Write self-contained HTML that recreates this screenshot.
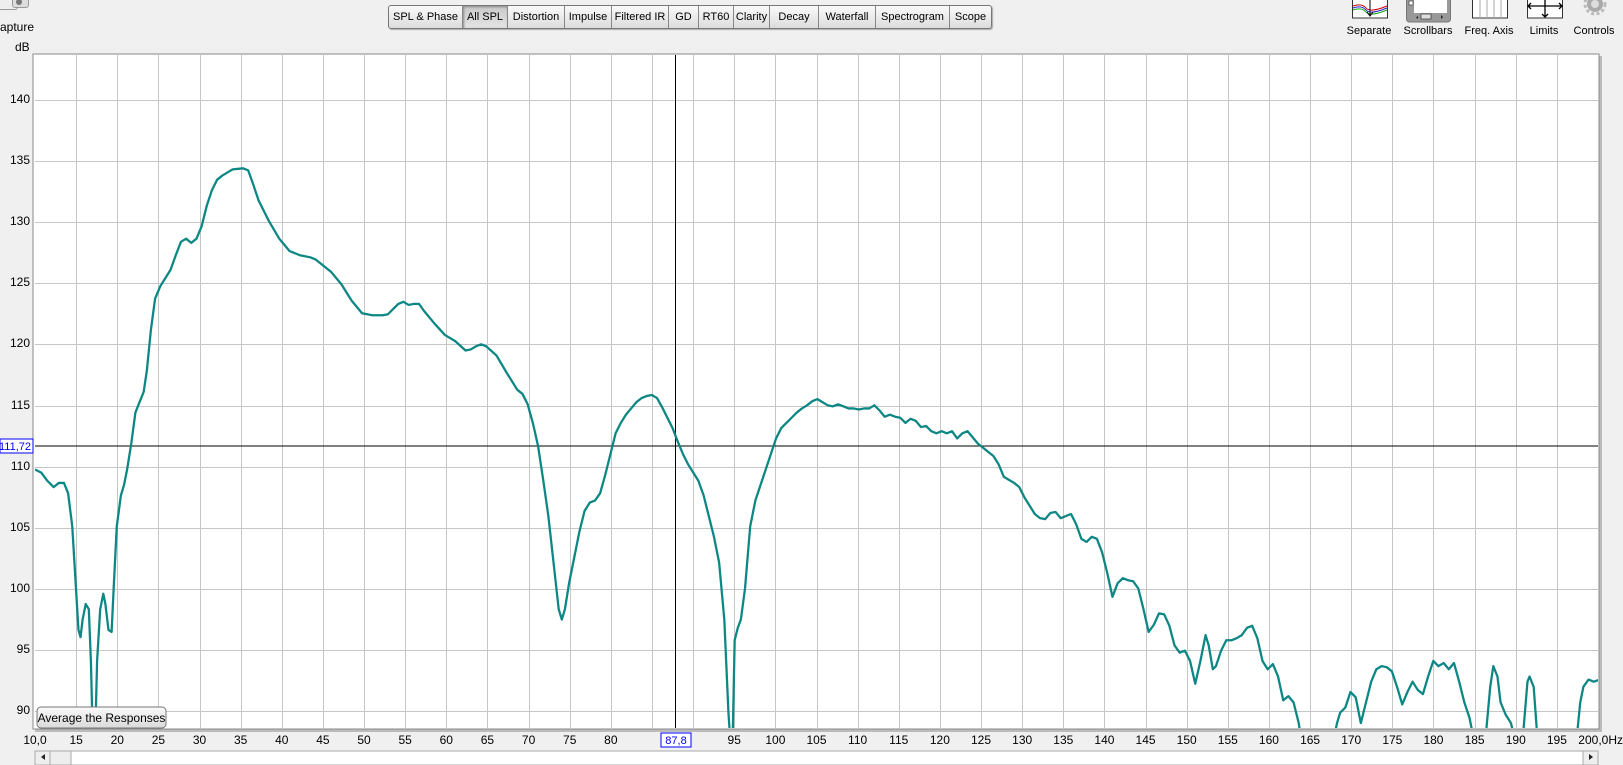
<!DOCTYPE html>
<html><head><meta charset="utf-8"><style>
html,body{margin:0;padding:0}
body{width:1623px;height:765px;background:#f0f0f0;position:relative;overflow:hidden;font-family:"Liberation Sans",Arial,sans-serif;color:#000}
.a{position:absolute;white-space:nowrap}
.tabs{position:absolute;left:388px;top:5px;height:22px;display:flex;border:1px solid #777;border-radius:3px;background:linear-gradient(#fafafa,#dcdcdc);box-shadow:1px 1px 1px #aaa}
.tabs div{font-size:11px;line-height:22px;border-right:1px solid #888;text-align:center;box-sizing:border-box;white-space:nowrap;overflow:hidden}
.tabs div.s{background:linear-gradient(#c9c9c9,#e4e4e4);box-shadow:inset 1px 1px 2px #888}
.lbl{font-size:11px;position:absolute;top:25px;transform:translateX(-50%);white-space:nowrap}
.yl{position:absolute;right:1593px;font-size:12px;text-align:right}
.xl{position:absolute;top:733px;font-size:12px;transform:translateX(-50%);white-space:nowrap}
</style></head><body>
<div class="a" style="left:-6px;top:-8px;width:22px;height:16px;border:1px solid #999;border-radius:3px;background:#eee"></div>
<div class="a" style="left:12px;top:-8px;width:15px;height:14px;border:1px solid #999;border-radius:3px;background:#ddd"></div>
<div class="a" style="left:16px;top:-1px;width:6px;height:6px;border-radius:50%;background:#777"></div>
<div class="a" style="left:0;top:20px;font-size:12px">apture</div>
<div class="a" style="left:15px;top:40px;font-size:12px">dB</div>

<div class="tabs">
<div style="width:74px">SPL &amp; Phase</div><div class="s" style="width:45px">All SPL</div><div style="width:57px">Distortion</div><div style="width:47px">Impulse</div><div style="width:57px">Filtered IR</div><div style="width:30px">GD</div><div style="width:35px">RT60</div><div style="width:36px">Clarity</div><div style="width:49px">Decay</div><div style="width:57px">Waterfall</div><div style="width:74px">Spectrogram</div><div style="width:41px;border-right:none">Scope</div>
</div>

<svg class="a" style="left:0;top:0" width="1623" height="24">
<rect x="1352.5" y="-2" width="35" height="20" fill="#fff" stroke="#333"/>
<path d="M1353 6 Q1362 3 1366 8 T1387 6" stroke="#c00" fill="none"/>
<path d="M1353 8 Q1362 5 1366 10 T1387 8" stroke="#22c" fill="none"/>
<path d="M1353 10 Q1362 7 1366 12 T1387 10" stroke="#1a1" fill="none"/>
<path d="M1370 0V15M1367 12l3 4 3-4" stroke="#000" fill="none"/>
<rect x="1406.5" y="-4" width="44" height="26" rx="3" fill="#999" stroke="#777"/>
<rect x="1414" y="-3" width="33" height="16" fill="#fff"/>
<rect x="1409" y="1" width="4" height="4" fill="#fff" stroke="#444" stroke-width=".7"/>
<rect x="1421" y="14" width="10" height="5" fill="#ddd" stroke="#333" stroke-width=".7"/>
<path d="M1418 16l-2 1.5 2 1.5zM1441 15v4l2-2z" fill="#222"/>
<rect x="1472.5" y="-2" width="35" height="20" fill="#fff" stroke="#333"/>
<path d="M1480 0v18M1487 0v18M1494 0v18M1501 0v18" stroke="#aaa"/>
<rect x="1527.5" y="-2" width="35" height="20" fill="#fff" stroke="#333"/>
<path d="M1529 6h32M1545 -2v18M1531 3l-3 3 3 3M1559 3l3 3-3 3M1542 14l3 3 3-3" stroke="#000" fill="none" stroke-width="1.3"/>
<circle cx="1595" cy="4" r="8" fill="#aaa"/><circle cx="1595" cy="4" r="4" fill="#ddd"/><circle cx="1595" cy="4" r="10" fill="none" stroke="#bbb" stroke-width="3" stroke-dasharray="3 2.5"/>
</svg>
<div class="lbl" style="left:1369px">Separate</div>
<div class="lbl" style="left:1428px">Scrollbars</div>
<div class="lbl" style="left:1489px">Freq. Axis</div>
<div class="lbl" style="left:1544px">Limits</div>
<div class="lbl" style="left:1594px">Controls</div>

<svg class="a" style="left:0;top:0" width="1623" height="765">
<defs><clipPath id="c"><rect x="35" y="55" width="1563" height="673"/></clipPath>
<linearGradient id="g" x1="0" x2="0" y1="0" y2="1"><stop offset="0" stop-color="#fafafa"/><stop offset="1" stop-color="#dadada"/></linearGradient></defs>
<rect x="35" y="56" width="1567" height="676" fill="#bbb"/>
<rect x="33" y="54" width="1566" height="675" fill="#fff" stroke="#888"/>
<g clip-path="url(#c)">
<path id="vg" stroke="#c6c6c6" fill="none"/>
<line x1="675.5" y1="55" x2="675.5" y2="728" stroke="#000"/>
<line x1="35" y1="446" x2="1598" y2="446" stroke="#000"/>
<g transform="translate(-0.19,-1.43) scale(1.035)">
<polyline fill="none" stroke="#0d8784" stroke-width="2.2" stroke-linejoin="round" points="34,455 40,458 46,466 52,472 57,468 62,468 66,478 70,510 73,560 76,610 78,617 80,600 83,585 86,590 88,640 90,720 92,720 94,640 97,590 100,575 102,585 105,610 108,612 110,570 113,510 117,480 120,470 123,455 127,430 131,400 135,390 139,380 142,360 146,320 150,290 155,278 160,270 165,262 170,248 175,235 180,232 185,236 190,232 195,220 200,200 205,185 210,175 215,171 220,168 225,165 235,164 240,166 245,180 250,195 260,215 270,232 280,244 290,248 300,250 305,252 310,256 320,264 330,276 340,292 350,304 360,306 370,306 375,305 380,300 385,295 390,293 395,296 400,295 405,295 410,302 420,314 430,325 440,331 450,340 455,339 460,336 465,334 470,336 480,345 490,362 500,378 505,382 510,392 515,410 520,432 525,465 530,500 535,545 540,590 543,600 546,590 550,565 555,540 560,515 565,495 570,487 575,485 580,478 585,460 590,440 595,420 600,410 605,402 610,396 615,390 620,386 625,384 630,383 635,386 640,395 645,405 650,415 655,428 660,440 665,450 670,458 675,466 680,480 685,500 690,520 695,545 700,600 704,690 706,720 708,720 710,620 713,608 716,600 720,570 725,510 730,485 735,470 740,455 745,440 750,425 755,415 760,410 765,405 770,400 775,396 780,393 785,389 790,387 795,390 800,393 805,394 810,392 815,394 820,396 825,396 830,397 835,396 840,396 845,393 850,398 855,404 860,402 865,404 870,405 875,410 880,406 885,408 890,414 895,413 900,418 905,420 910,418 915,420 920,418 925,425 930,420 935,418 940,424 945,430 950,434 955,438 960,442 965,450 970,462 975,465 980,468 985,472 990,482 995,490 1000,498 1005,502 1010,503 1015,497 1020,496 1025,502 1030,500 1035,498 1040,508 1045,522 1050,525 1055,520 1060,522 1065,535 1070,555 1075,578 1080,565 1085,560 1090,562 1095,563 1100,570 1105,590 1110,612 1115,605 1120,594 1125,595 1130,606 1135,625 1140,632 1145,630 1150,640 1155,662 1160,640 1165,615 1168,625 1172,648 1175,645 1180,630 1185,620 1190,620 1195,618 1200,615 1205,608 1210,606 1215,618 1220,640 1225,648 1230,643 1235,655 1240,678 1245,674 1250,680 1255,700 1258,720"/>
<polyline fill="none" stroke="#0d8784" stroke-width="2.2" stroke-linejoin="round" points="1288,720 1292,700 1295,690 1300,685 1305,670 1310,675 1315,700 1320,680 1325,660 1330,648 1335,645 1340,646 1345,650 1350,665 1355,682 1360,670 1365,660 1370,668 1375,672 1380,655 1385,640 1390,645 1395,642 1400,648 1405,642 1410,660 1415,680 1420,695 1425,720"/>
<polyline fill="none" stroke="#0d8784" stroke-width="2.2" stroke-linejoin="round" points="1435,720 1440,665 1443,645 1447,655 1450,680 1455,692 1460,700 1465,720"/>
<polyline fill="none" stroke="#0d8784" stroke-width="2.2" stroke-linejoin="round" points="1471,720 1476,660 1478,655 1482,665 1486,720"/>
<polyline fill="none" stroke="#0d8784" stroke-width="2.2" stroke-linejoin="round" points="1523,720 1527,680 1530,665 1535,658 1540,660 1546,658"/>
</g>
</g>
<rect x="37" y="707" width="129" height="21" rx="4" fill="url(#g)" stroke="#777"/>
<text x="101.5" y="722" font-size="12" text-anchor="middle" font-family="Liberation Sans,sans-serif">Average the Responses</text>
<rect x="0" y="439" width="33" height="14" fill="#fff" stroke="#00f"/>
<text x="31" y="450" font-size="11" fill="#00f" text-anchor="end" font-family="Liberation Sans,sans-serif">111,72</text>
<rect x="661" y="733" width="30" height="14" fill="#fff" stroke="#00f"/>
<text x="676" y="744" font-size="11" fill="#00f" text-anchor="middle" font-family="Liberation Sans,sans-serif">87,8</text>
<rect x="35" y="751" width="1563" height="14" fill="#fff" stroke="#aaa"/>
<rect x="35" y="751" width="15" height="14" fill="#eee" stroke="#aaa"/>
<rect x="50" y="751" width="21" height="14" fill="#eee" stroke="#aaa"/>
<path d="M45 754v6l-4-3z" fill="#222"/>
<rect x="1583" y="751" width="15" height="14" fill="#eee" stroke="#aaa"/>
<path d="M1589 754v6l4-3z" fill="#222"/>
</svg>
<div id="labels"></div>
<script>
var v='';
for(var i=1;i<38;i++){var x=35+i*1563/38;v+='M'+(Math.round(x)+.5)+' 55V728';}
var h='';
for(var d=140;d>=90;d-=5){var y=100+(140-d)*611/50;h+='<div class="yl" style="top:'+(y-8)+'px">'+d+'</div>';
v+='M35 '+(Math.round(y)+.5)+'H1598';}
document.getElementById('vg').setAttribute('d',v);
for(var f=10;f<=195;f+=5){var x=35+(f-10)*1563/190;if(Math.abs(f-87.8)<3)continue;var t=f==10?'10,0':f;
h+='<div class="xl" style="left:'+x+'px">'+t+'</div>';}
h+='<div class="a" style="right:0;top:733px;font-size:12px">200,0Hz</div>';
document.getElementById('labels').innerHTML=h;
</script>
</body></html>
